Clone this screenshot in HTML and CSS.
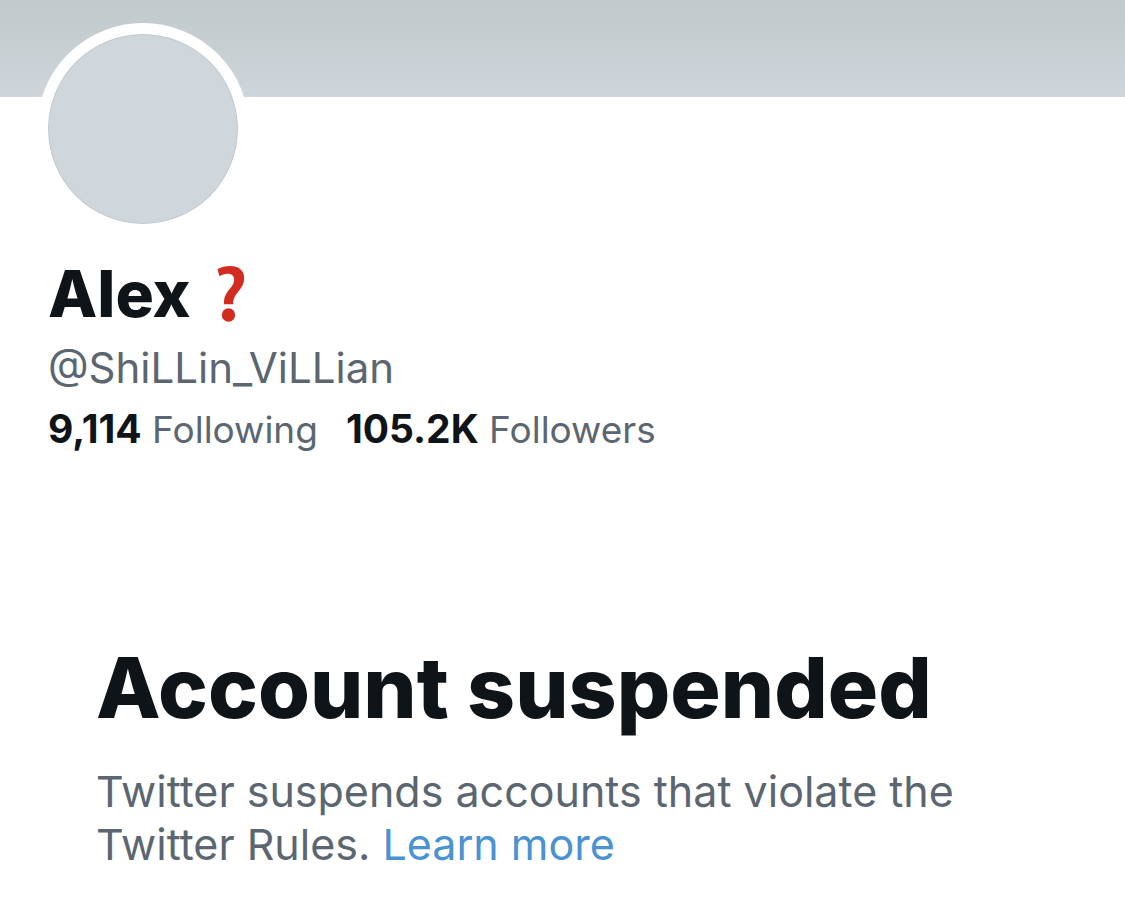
FILE: index.html
```
<!DOCTYPE html>
<html lang="en">
<head>
  <meta charset="UTF-8">
  <meta name="viewport" content="width=device-width, initial-scale=1.0">
  <title>Alex (@ShiLLin_ViLLian)</title>
  <link rel="stylesheet" href="styles.css">
</head>
<body>
  <div class="banner"></div>

  <main>
    <section class="profile">
      <div class="avatar"></div>
      <h1 class="name">
        Alex
        <svg class="emoji" viewBox="0 0 81 168" role="img" aria-label="question mark">
          <path d="M0 10C12 3 24 0 37 0c27 0 43 14 43 36 0 18-8 29-19 43-10 12-14 20-14 36H20c-2-20 5-32 16-45 9-11 14-19 14-29 0-12-8-18-20-18-9 0-16 3-24 8z"/>
          <circle cx="33" cy="147" r="20"/>
        </svg>
      </h1>
      <p class="handle">@ShiLLin_ViLLian</p>
      <div class="stats">
        <a href="#"><strong>9,114</strong> Following</a>
        <a href="#"><strong>105.2K</strong> Followers</a>
      </div>
    </section>

    <section class="notice">
      <h2>Account suspended</h2>
      <p>Twitter suspends accounts that violate the Twitter Rules. <a href="#">Learn more</a></p>
    </section>
  </main>
</body>
</html>
```
FILE: styles.css
```
* {
  margin: 0;
  padding: 0;
  box-sizing: border-box;
}

body {
  background-color: #fff;
  color: #0f1419;
  font-family: Inter, "Liberation Sans", sans-serif;
}

a {
  color: inherit;
  text-decoration: none;
}

.banner {
  height: 97px;
  background: linear-gradient(#c2c9cc, #cfd6db);
}

.profile {
  padding: 0 48px;
}

.avatar {
  width: 212px;
  height: 212px;
  margin: -74px 0 0 -11px;
  border: 11px solid #fff;
  border-radius: 50%;
  background-color: #cfd6dc;
  background-clip: padding-box;
  box-shadow: inset 0 0 0 1px #c1c8ce;
}

.name {
  display: flex;
  align-items: center;
  gap: 26px;
  margin-top: 23px;
  font-size: 64px;
  line-height: 72px;
  font-weight: 800;
}

.emoji {
  width: 28px;
  height: 56px;
  fill: #d22b20;
}

.handle {
  margin-top: 10px;
  color: #5b6670;
  font-size: 42px;
  line-height: 56px;
}

.stats {
  display: flex;
  gap: 28px;
  margin-top: 9px;
  color: #5b6670;
  font-size: 37px;
  line-height: 48px;
}

.stats strong {
  color: #0f1419;
  font-size: 39px;
  font-weight: 700;
}

.notice {
  padding: 180px 96px 48px;
}

.notice h2 {
  font-size: 84px;
  line-height: 108px;
  font-weight: 800;
}

.notice p {
  margin-top: 23px;
  color: #5b6670;
  font-size: 43px;
  line-height: 53px;
}

.notice a {
  color: #4a92d2;
}
```
